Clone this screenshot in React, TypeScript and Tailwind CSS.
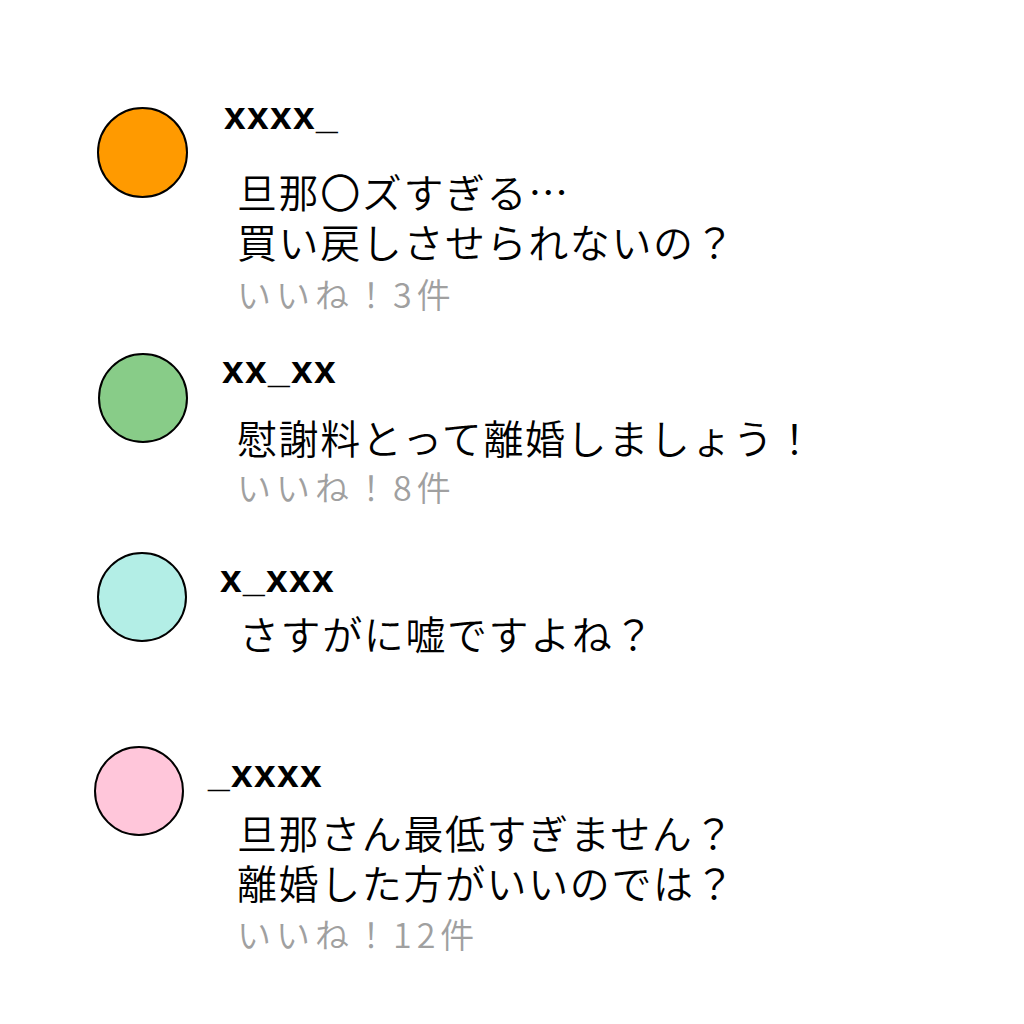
import React from "react";

const jp = { fontFamily: '"Noto Sans CJK JP", "Noto Sans", sans-serif' };
const nm = { fontFamily: '"Liberation Sans", Arial, sans-serif' };

export default function App() {
  return (
    <div className="w-[1024px] h-[1024px] bg-white overflow-hidden pt-[97px]">
      {/* Comment 1 */}
      <div className="flex items-start h-[254px]">
        <div className="ml-[97px] mt-[10px] w-[91px] h-[91px] rounded-full border-2 border-black bg-[#ff9a00] shrink-0" />
        <div className="ml-[36px] flex flex-col">
          <div style={nm} className="text-[39px] leading-[38px] font-bold tracking-[1.3px] text-black">xxxx_</div>
          <div style={jp} className="ml-[13px] mt-[31px] text-[40px] leading-[50px] tracking-[1.6px] font-[350] text-black">
            <div>旦那〇ズすぎる…</div>
            <div>買い戻しさせられないの？</div>
          </div>
          <div style={jp} className="ml-[13px] mt-[8px] text-[34px] leading-[40px] tracking-[5px] font-[350] text-[#a0a0a0]">いいね！3件</div>
        </div>
      </div>

      {/* Comment 2 */}
      <div className="flex items-start h-[209px]">
        <div className="ml-[98px] mt-[2px] w-[90px] h-[90px] rounded-full border-2 border-black bg-[#88cc88] shrink-0" />
        <div className="ml-[34px] flex flex-col">
          <div style={nm} className="text-[39px] leading-[38px] font-bold tracking-[1.3px] text-black">xx_xx</div>
          <div style={jp} className="ml-[15px] mt-[23px] text-[40px] leading-[50px] tracking-[1.6px] font-[350] text-black">
            <div>慰謝料とって離婚しましょう！</div>
          </div>
          <div style={jp} className="ml-[15px] mt-[5px] text-[34px] leading-[40px] tracking-[5px] font-[350] text-[#a0a0a0]">いいね！8件</div>
        </div>
      </div>

      {/* Comment 3 */}
      <div className="flex items-start h-[195px]">
        <div className="ml-[97px] -mt-[8px] w-[90px] h-[90px] rounded-full border-2 border-black bg-[#b3eee6] shrink-0" />
        <div className="ml-[33px] flex flex-col">
          <div style={nm} className="text-[39px] leading-[38px] font-bold tracking-[1.3px] text-black">x_xxx</div>
          <div style={jp} className="ml-[19px] mt-[10px] text-[40px] leading-[50px] tracking-[1.6px] font-[350] text-black">
            <div>さすがに嘘ですよね？</div>
          </div>
        </div>
      </div>

      {/* Comment 4 */}
      <div className="flex items-start">
        <div className="ml-[94px] -mt-[9px] w-[90px] h-[90px] rounded-full border-2 border-black bg-[#ffc6da] shrink-0" />
        <div className="ml-[24px] flex flex-col">
          <div style={nm} className="text-[39px] leading-[38px] font-bold tracking-[1.3px] text-black">_xxxx</div>
          <div style={jp} className="ml-[29px] mt-[14px] text-[40px] leading-[50px] tracking-[1.6px] font-[350] text-black">
            <div>旦那さん最低すぎません？</div>
            <div>離婚した方がいいのでは？</div>
          </div>
          <div style={jp} className="ml-[29px] mt-[7px] text-[34px] leading-[40px] tracking-[5px] font-[350] text-[#a0a0a0]">いいね！12件</div>
        </div>
      </div>
    </div>
  );
}
